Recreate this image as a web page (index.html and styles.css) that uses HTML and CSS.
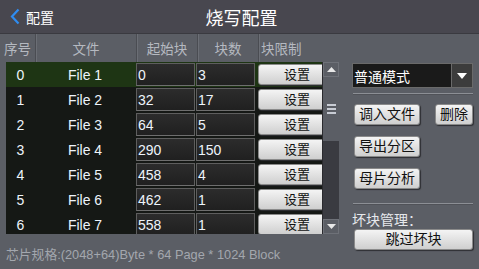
FILE: index.html
```html
<!DOCTYPE html>
<html lang="zh-CN">
<head>
    <meta charset="UTF-8">
    <meta name="viewport" content="width=device-width, initial-scale=1.0">
    <title>烧写配置</title>
    <link rel="stylesheet" href="styles.css">
</head>
<body>
    <div class="topbar">
        <a class="back" href="#">
            <svg width="10" height="17" viewBox="0 0 10 17"><path d="M8.5 1.5 L2 8.5 L8.5 15.5" fill="none" stroke="#2f8cf0" stroke-width="2.2"/></svg>
            <span>配置</span>
        </a>
        <div class="title">烧写配置</div>
        <div></div>
    </div>

    <div class="main">
        <div class="left">
            <div class="thead">
                <div class="th c-idx">序号</div>
                <div class="th c-file">文件</div>
                <div class="th c-start">起始块</div>
                <div class="th c-count">块数</div>
                <div class="th c-limit">块限制</div>
            </div>
            <div class="tbody">
                <div class="rows">
                    <div class="row selected">
                        <div class="c-idx">0</div><div class="c-file">File 1</div>
                        <div class="c-start"><span class="cell">0</span></div>
                        <div class="c-count"><span class="cell">3</span></div>
                        <div class="c-limit"><button class="btn set">设置</button></div>
                    </div>
                    <div class="row">
                        <div class="c-idx">1</div><div class="c-file">File 2</div>
                        <div class="c-start"><span class="cell">32</span></div>
                        <div class="c-count"><span class="cell">17</span></div>
                        <div class="c-limit"><button class="btn set">设置</button></div>
                    </div>
                    <div class="row">
                        <div class="c-idx">2</div><div class="c-file">File 3</div>
                        <div class="c-start"><span class="cell">64</span></div>
                        <div class="c-count"><span class="cell">5</span></div>
                        <div class="c-limit"><button class="btn set">设置</button></div>
                    </div>
                    <div class="row">
                        <div class="c-idx">3</div><div class="c-file">File 4</div>
                        <div class="c-start"><span class="cell">290</span></div>
                        <div class="c-count"><span class="cell">150</span></div>
                        <div class="c-limit"><button class="btn set">设置</button></div>
                    </div>
                    <div class="row">
                        <div class="c-idx">4</div><div class="c-file">File 5</div>
                        <div class="c-start"><span class="cell">458</span></div>
                        <div class="c-count"><span class="cell">4</span></div>
                        <div class="c-limit"><button class="btn set">设置</button></div>
                    </div>
                    <div class="row">
                        <div class="c-idx">5</div><div class="c-file">File 6</div>
                        <div class="c-start"><span class="cell">462</span></div>
                        <div class="c-count"><span class="cell">1</span></div>
                        <div class="c-limit"><button class="btn set">设置</button></div>
                    </div>
                    <div class="row">
                        <div class="c-idx">6</div><div class="c-file">File 7</div>
                        <div class="c-start"><span class="cell">558</span></div>
                        <div class="c-count"><span class="cell">1</span></div>
                        <div class="c-limit"><button class="btn set">设置</button></div>
                    </div>
                </div>
                <div class="scrollbar">
                    <div class="arrow up"><svg width="9" height="5" viewBox="0 0 9 5"><path d="M0 5 L4.5 0 L9 5 Z" fill="#e8e8e8"/></svg></div>
                    <div class="thumb"><span></span><span></span><span></span></div>
                    <div class="track"></div>
                    <div class="arrow down"><svg width="9" height="5" viewBox="0 0 9 5"><path d="M0 0 L4.5 5 L9 0 Z" fill="#e8e8e8"/></svg></div>
                </div>
            </div>
            <div class="footer">芯片规格:(2048+64)Byte * 64 Page * 1024 Block</div>
        </div>

        <div class="right">
            <div class="combo">
                <span class="combo-text">普通模式</span>
                <span class="combo-btn"><svg width="10" height="6" viewBox="0 0 10 6"><path d="M0 0 L5 6 L10 0 Z" fill="#fff"/></svg></span>
            </div>
            <div class="sep"></div>
            <div class="btn-row">
                <button class="btn">调入文件</button>
                <button class="btn">删除</button>
            </div>
            <div class="btn-row">
                <button class="btn">导出分区</button>
            </div>
            <div class="btn-row last">
                <button class="btn">母片分析</button>
            </div>
            <div class="sep"></div>
            <div class="label">坏块管理：</div>
            <button class="btn wide">跳过坏块</button>
        </div>
    </div>
</body>
</html>
```

FILE: styles.css
```css
body {
    margin: 0;
    width: 479px;
    height: 269px;
    overflow: hidden;
    background-color: #5b5e65;
    font-family: "Liberation Sans", "Noto Sans CJK SC", sans-serif;
    color: #fff;
}

/* Top bar */
.topbar {
    height: 33px;
    background-color: #48474f;
    border-bottom: 1px solid #3a3a40;
    display: grid;
    grid-template-columns: 1fr auto 1fr;
    align-items: center;
}
.back {
    display: flex;
    align-items: center;
    gap: 6px;
    padding-left: 10px;
    color: #fff;
    text-decoration: none;
    font-size: 14px;
}
.title {
    font-size: 18px;
    padding-left: 4px;
}

/* Table */
.main {
    display: flex;
}
.left {
    width: 345px;
}
.thead {
    height: 28px;
    display: flex;
    color: #b5b9c0;
    font-size: 13.5px;
}
.th {
    display: flex;
    align-items: center;
    justify-content: center;
    border-right: 1px solid #4a4c52;
    box-shadow: 1px 0 0 #6b6e75;
}
.th.c-limit {
    justify-content: flex-start;
    border-right: none;
    box-shadow: none;
    padding-left: 2px;
}
.c-idx { width: 35px; }
.c-file { width: 100px; }
.c-start { width: 60px; }
.c-count { width: 60px; }
.c-limit { width: 82px; }

.tbody {
    margin-left: 6px;
    width: 333px;
    height: 172px;
    background-color: #151815;
    display: flex;
    overflow: hidden;
}
.rows {
    width: 316px;
    overflow: hidden;
    flex-shrink: 0;
}
.row {
    height: 25px;
    display: flex;
    align-items: center;
    font-size: 14px;
    color: #eef4fb;
}
.row > .c-idx {
    width: 29px;
    flex-shrink: 0;
    text-align: center;
}
.row > .c-file {
    flex-shrink: 0;
    text-align: center;
}
.row.selected {
    background-color: #1e3514;
}
.row > .c-start,
.row > .c-count {
    height: 25px;
    flex-shrink: 0;
    display: flex;
    padding: 1px 0 1px 1px;
    box-sizing: border-box;
}
.cell {
    flex: 1;
    display: flex;
    align-items: center;
    padding-left: 1px;
    background: linear-gradient(#2c2c2c, #202020);
    border: 1px solid #5e5e5e;
    border-bottom-color: #6e6e6e;
}
.row > .c-limit {
    flex-shrink: 0;
    padding-left: 3px;
}

/* Buttons */
.btn {
    height: 21px;
    padding: 0 4px;
    border: 1px solid #8a8a8a;
    border-radius: 3px;
    background: linear-gradient(#f4f4f4, #cfcfcf);
    box-shadow: 1px 1px 1px #2e2f33;
    font-family: "Liberation Sans", "Noto Sans CJK SC", sans-serif;
    font-size: 14px;
    color: #111;
    line-height: 19px;
}
.btn.set {
    width: 78px;
    font-size: 13px;
}

/* Scrollbar */
.scrollbar {
    width: 16px;
    display: flex;
    flex-direction: column;
    background-color: #3a3b41;
    border-left: 1px solid #2a2a2e;
}
.arrow {
    height: 15px;
    display: flex;
    align-items: center;
    justify-content: center;
    background-color: #5b5e65;
    border: 1px solid #6e7178;
    box-sizing: border-box;
}
.thumb {
    height: 64px;
    background-color: #5b5e65;
    display: flex;
    flex-direction: column;
    justify-content: center;
    align-items: center;
    gap: 2px;
}
.thumb span {
    width: 9px;
    height: 2px;
    background-color: #c8ccd4;
}
.track {
    flex: 1;
}

.footer {
    padding: 10px 0 0 6px;
    font-size: 12.8px;
    color: #a3a7ae;
}

/* Right panel */
.right {
    flex: 1;
    padding: 29px 11px 0 7px;
    display: flex;
    flex-direction: column;
}
.combo {
    height: 23px;
    margin-left: 2px;
    display: flex;
    background-color: #1a1a1a;
    border: 1px solid #6a6a6a;
}
.combo-text {
    flex: 1;
    display: flex;
    align-items: center;
    font-size: 14px;
    padding-left: 1px;
}
.combo-btn {
    width: 20px;
    display: flex;
    align-items: center;
    justify-content: center;
    background-color: #3c3c3c;
    border-left: 1px solid #6a6a6a;
}
.sep {
    height: 1px;
    margin: 5px 0 10px 3px;
    background-color: #8c8f95;
    box-shadow: 0 1px 0 #505258;
}
.btn-row {
    display: flex;
    justify-content: space-between;
    margin: 0 0 11px 4px;
}
.btn-row.last {
    margin-bottom: 9px;
}
.label {
    font-size: 14px;
    line-height: 16px;
    color: #e6e8ec;
    margin: -2px 0 1px 2px;
}
.btn.wide {
    width: 119px;
    margin-left: 4px;
}
```
